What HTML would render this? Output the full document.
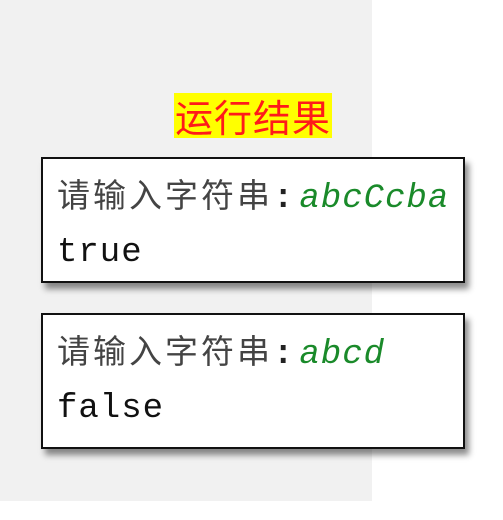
<!DOCTYPE html>
<html><head><meta charset="utf-8"><style>
body{margin:0;width:503px;height:520px;background:#fff;position:relative;overflow:hidden}
.gray{position:absolute;left:0;top:0;width:372px;height:501px;background:#f1f1f1}
.lbl{position:absolute;left:174px;top:93px;width:158px;height:45px;background:#ffff00;color:#ff1a1a;font:38px "Noto Sans CJK SC",sans-serif;line-height:45px;text-align:center;letter-spacing:1px}
.box{position:absolute;left:41px;width:420px;background:#fff;border:2px solid #111;box-shadow:4px 6px 6px rgba(0,0,0,.45)}
.l1{position:absolute;left:14px;top:10px;white-space:nowrap;line-height:40px}
.cn{font:33px "Noto Sans CJK SC",sans-serif;color:#444;letter-spacing:3px}
.col{font:bold 34px "Liberation Mono",monospace;color:#222;margin-left:0px;margin-right:6px}
.g{font:italic 34px "Liberation Mono",monospace;color:#1a8a2a;letter-spacing:1px}
.l2{position:absolute;left:14px;top:74px;font:34px "Liberation Mono",monospace;color:#111;line-height:40px;letter-spacing:1px}
</style></head><body>
<div class="gray"></div>
<div class="lbl">运行结果</div>
<div class="box" style="top:157px;height:122px">
<div class="l1"><span class="cn">请输入字符串</span><span class="col">:</span><span class="g">abcCcba</span></div>
<div class="l2">true</div></div>
<div class="box" style="top:313px;height:132px">
<div class="l1"><span class="cn">请输入字符串</span><span class="col">:</span><span class="g">abcd</span></div>
<div class="l2">false</div></div>
</body></html>
